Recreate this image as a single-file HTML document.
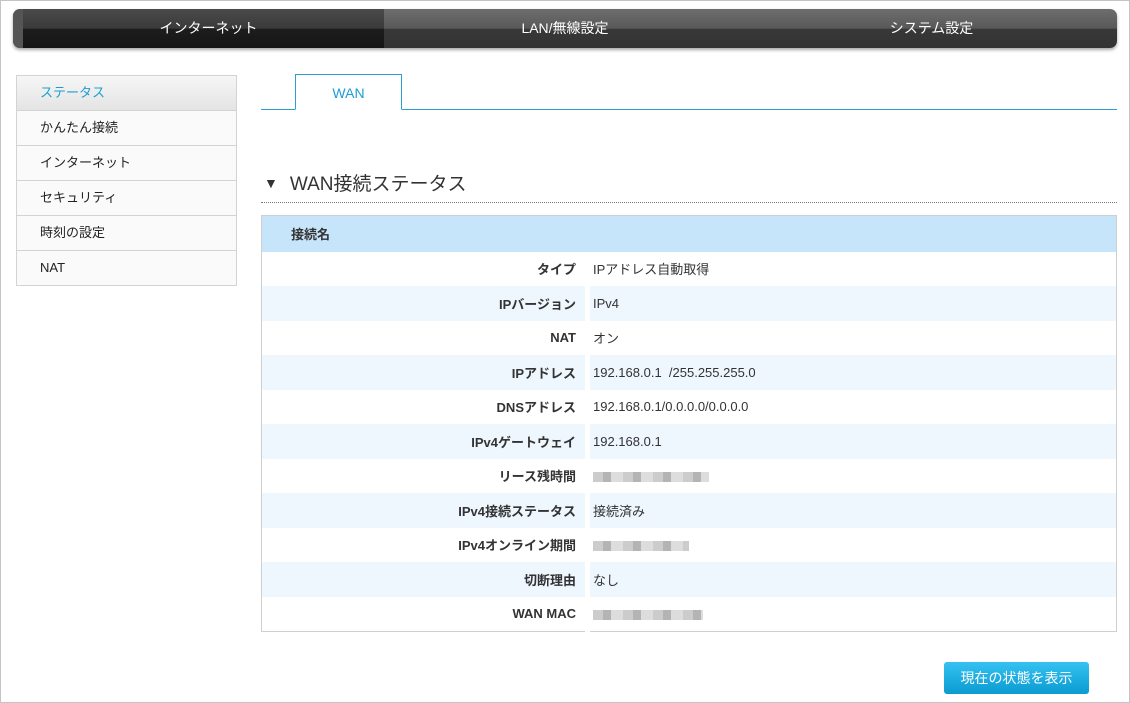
<!DOCTYPE html>
<html><head><meta charset="utf-8"><style>
*{margin:0;padding:0;box-sizing:border-box}
body{width:1130px;height:703px;background:#fff;font-family:"Liberation Sans","Noto Sans CJK JP",sans-serif;position:relative;overflow:hidden;border:1px solid #c9c2c4;}
.nav{position:absolute;left:12px;top:8px;width:1104px;height:39px;border-radius:7px;overflow:hidden;display:flex;box-shadow:0 2px 3px rgba(0,0,0,.35);background:linear-gradient(#6e6e6e,#585858 50%,#383838 51%,#333 100%)}
.nav div{flex:0 0 auto;color:#fff;font-size:14px;text-align:center;line-height:39px}
.nav .a{width:371px;background:linear-gradient(#4a4a4a,#3a3a3a 50%,#1d1d1d 51%,#151515);padding-left:10px;border-left:10px solid #555}
.nav .b{width:362px}.nav .c{width:371px}
.side{position:absolute;left:15px;top:74px;width:221px;border:1px solid #d3d3d3;border-bottom:none}
.side div{height:35px;line-height:34px;border-bottom:1px solid #d3d3d3;padding-left:23px;font-size:13px;color:#222;background:#fafafa}
.side div.s{background:linear-gradient(#f6f6f6,#e4e4e4);color:#1a9fd4;}
.tabline{position:absolute;left:260px;top:108px;width:856px;border-top:1px solid #2a9fd0}
.tab{position:absolute;left:294px;top:73px;width:107px;height:36px;border:1px solid #2a9fd0;border-bottom:1px solid #fff;background:#fff;color:#1a9fd4;font-size:14px;text-align:center;line-height:36px}
h2{position:absolute;left:263px;top:168px;font-size:19px;font-weight:normal;color:#333}
h2 span{font-size:14px;margin-right:12px;vertical-align:2px}
.dots{position:absolute;left:260px;top:201px;width:856px;border-top:1px dotted #777}
table{position:absolute;left:260px;top:214px;width:856px;border:1px solid #cfcfcf;border-collapse:collapse;font-size:13px;color:#333}
th{background:#c6e5fb;height:36px;text-align:left;padding-left:29px;font-size:13px;color:#333}
td{height:34.5px}
td.l{width:326px;text-align:right;font-weight:bold;padding-right:9px;border-right:5px solid #fff}
td.v{padding-left:3px}
tr.z td{background:#eef6fe}
.blur{display:inline-block;height:10px;vertical-align:middle;background:repeating-linear-gradient(90deg,#ccc 0 10px,#b4b4b4 10px 18px,#ddd 18px 30px)}
.btn{position:absolute;left:943px;top:661px;width:145px;height:32px;border-radius:3px;background:linear-gradient(#35c2f2,#0b9bd0);color:#fff;font-size:14px;text-align:center;line-height:32px}
</style></head><body>
<div class="nav"><div class="a">インターネット</div><div class="b">LAN/無線設定</div><div class="c">システム設定</div></div>
<div class="side"><div class="s">ステータス</div><div>かんたん接続</div><div>インターネット</div><div>セキュリティ</div><div>時刻の設定</div><div>NAT</div></div>
<div class="tabline"></div><div class="tab">WAN</div>
<h2><span>▼</span>WAN接続ステータス</h2>
<div class="dots"></div>
<table>
<tr><th colspan="2">接続名</th></tr>
<tr><td class="l">タイプ</td><td class="v">IPアドレス自動取得</td></tr>
<tr class="z"><td class="l">IPバージョン</td><td class="v">IPv4</td></tr>
<tr><td class="l">NAT</td><td class="v">オン</td></tr>
<tr class="z"><td class="l">IPアドレス</td><td class="v">192.168.0.1 &nbsp;/255.255.255.0</td></tr>
<tr><td class="l">DNSアドレス</td><td class="v">192.168.0.1/0.0.0.0/0.0.0.0</td></tr>
<tr class="z"><td class="l">IPv4ゲートウェイ</td><td class="v">192.168.0.1</td></tr>
<tr><td class="l">リース残時間</td><td class="v"><span class="blur" style="width:116px"></span></td></tr>
<tr class="z"><td class="l">IPv4接続ステータス</td><td class="v">接続済み</td></tr>
<tr><td class="l">IPv4オンライン期間</td><td class="v"><span class="blur" style="width:96px"></span></td></tr>
<tr class="z"><td class="l">切断理由</td><td class="v">なし</td></tr>
<tr><td class="l">WAN MAC</td><td class="v"><span class="blur" style="width:110px"></span></td></tr>
</table>
<div class="btn">現在の状態を表示</div>
</body></html>
